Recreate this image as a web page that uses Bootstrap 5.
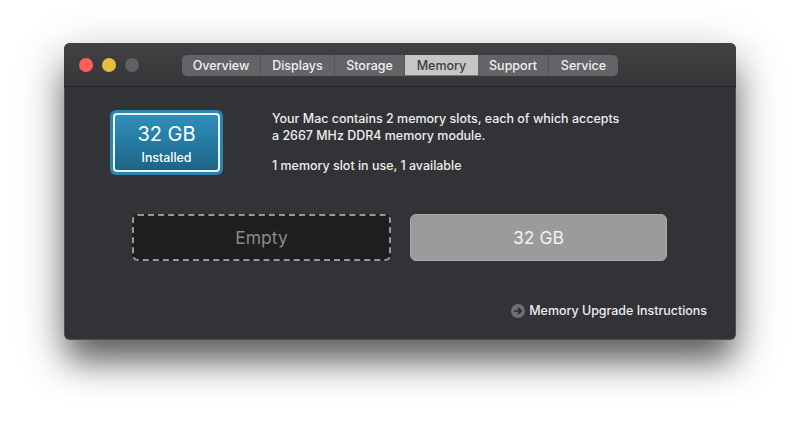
<!DOCTYPE html>
<html lang="en">
<head>
<meta charset="utf-8">
<title>About This Mac - Memory</title>
<link href="https://cdn.jsdelivr.net/npm/bootstrap@5.3.0/dist/css/bootstrap.min.css" rel="stylesheet">
<style>
html,body{height:100%;overflow:hidden}
body{background:#fff;padding:43px 64px 0;font-family:Inter,"Liberation Sans",sans-serif;-webkit-font-smoothing:antialiased}
.mac-win{width:672px;height:297px;border-radius:6px;background:#323337;box-shadow:0 0 0 1px rgba(125,125,128,.4) inset,0 24px 32px -4px rgba(0,0,0,.5),0 14px 50px rgba(0,0,0,.3);color:#eeeeee;overflow:hidden}
.mac-title{height:44px;padding:12px 0 0 15px;background:linear-gradient(#414144,#37373a);border-bottom:1px solid #232326}
.light{width:14px;height:14px;border-radius:50%}
.l-red{background:#ff5f57}.l-yel{background:#e5c03f}.l-off{background:#5f6063}
.lights{gap:9px;margin-top:3px;width:103px}
.seg{height:21px;border-radius:5px;background:#636467;overflow:hidden;font-size:12.5px;line-height:21px;font-weight:500}
.seg-i{text-align:center;color:#f0f0f0;border-right:1px solid #545558}
.seg-i:last-child{border-right:0}
.seg-on{background:#c6c6c7;color:#3c3c3e;border-right:0;border-bottom:1px solid #77787a}
.w-ov{width:79px}.w-di{width:74px}.w-st{width:70px}.w-me{width:73px}.w-su{width:71px}.w-se{width:69px}
.mac-body{padding:23px 29px 0 46px}
.badge-mem{width:113px;height:65px;padding:3px;border-radius:6px;background:#2a86b0;flex:none}
.badge-in{height:100%;border:2px solid #e9f2f6;border-radius:4px;background:linear-gradient(#2f90bd,#1c6486);color:#fff;text-align:center}
.b-big{font-size:20px;line-height:24px;margin-top:7px}
.b-sm{font-size:12.4px;line-height:15px;margin-top:4px;font-weight:500}
.mem-copy{margin:1px 0 0 49px;font-size:12.47px;line-height:16.5px;color:#ededed;font-weight:500}
.mem-copy p{margin:0}
.mem-copy p+p{margin-top:14px}
.slots{gap:19px;margin:39px 0 0 22px}
.slot{height:47px;border-radius:6px;display:flex;align-items:center;justify-content:center;font-size:17.5px;padding-top:1px}
.slot-e{width:259px;background:#1e1e1e;border:2px dashed #97979a;color:#8a8a8c}
.slot-f{width:257px;background:#9b9b9c;color:#f2f2f2;border:1px solid #a8a8a9}
.more{margin-top:42px;font-size:12.45px;line-height:16px;color:#eeeeee;gap:4px;font-weight:500}
.more svg{flex:none}
</style>
</head>
<body>
<div class="mac-win d-flex flex-column">
  <div class="mac-title d-flex align-items-start">
    <div class="lights d-flex">
      <span class="light l-red"></span><span class="light l-yel"></span><span class="light l-off"></span>
    </div>
    <div class="seg d-flex">
      <div class="seg-i w-ov">Overview</div>
      <div class="seg-i w-di">Displays</div>
      <div class="seg-i w-st">Storage</div>
      <div class="seg-i seg-on w-me">Memory</div>
      <div class="seg-i w-su">Support</div>
      <div class="seg-i w-se">Service</div>
    </div>
  </div>
  <div class="mac-body flex-grow-1">
    <div class="d-flex align-items-start">
      <div class="badge-mem">
        <div class="badge-in">
          <div class="b-big">32 GB</div>
          <div class="b-sm">Installed</div>
        </div>
      </div>
      <div class="mem-copy">
        <p>Your Mac contains 2 memory slots, each of which accepts<br>a 2667 MHz DDR4 memory module.</p>
        <p>1 memory slot in use, 1 available</p>
      </div>
    </div>
    <div class="slots d-flex">
      <div class="slot slot-e">Empty</div>
      <div class="slot slot-f">32 GB</div>
    </div>
    <div class="more d-flex justify-content-end align-items-center">
      <svg width="14" height="14" viewBox="0 0 14 14"><circle cx="7" cy="7" r="7" fill="#6e6f72"/><path d="M3 7h7M7 3.8 10.2 7 7 10.2" fill="none" stroke="#2c2c2f" stroke-width="1.7"/></svg>
      <span>Memory Upgrade Instructions</span>
    </div>
  </div>
</div>
</body>
</html>
